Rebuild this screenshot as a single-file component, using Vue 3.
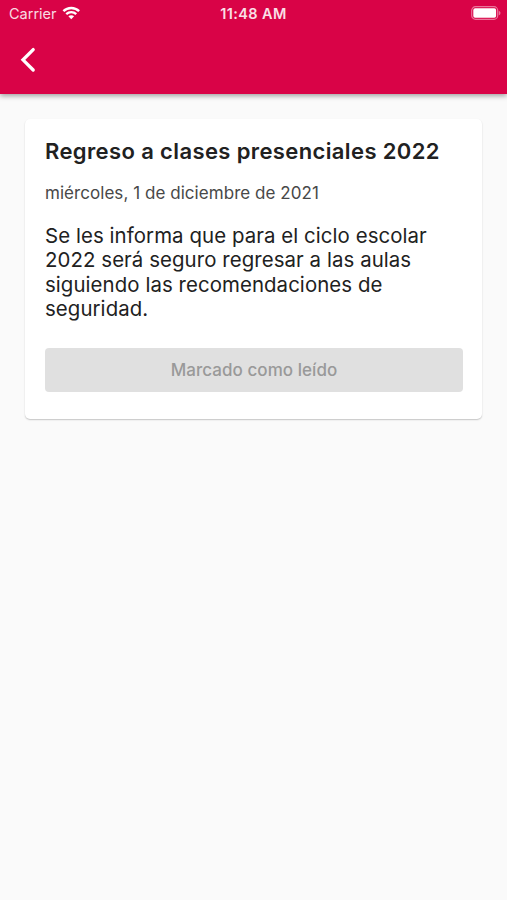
<template>
  <div class="screen">
    <header class="top">
      <div class="status">
        <div class="carrier">
          <span class="carrier-name">Carrier</span>
          <svg class="wifi" width="18.5" height="14" viewBox="0 0 20 15">
            <path d="M1.5 5.5C6.2 .9 13.8 .9 18.5 5.5" />
            <path d="M4.6 8.7C7.7 5.9 12.3 5.9 15.4 8.7" />
            <path class="fill" d="M10 14.2L6.9 11.1C8.6 9.5 11.4 9.5 13.1 11.1Z" />
          </svg>
        </div>
        <span class="clock">11:48 AM</span>
        <svg class="battery" width="30" height="14" viewBox="0 0 30 14">
          <rect class="shell" x=".7" y=".7" width="26" height="12.6" rx="3.8" />
          <rect class="charge" x="2.3" y="2.2" width="22.8" height="9.6" rx="1.8" />
          <path class="tip" d="M27.8 4.7C30 5.6 30 8.4 27.8 9.3Z" />
        </svg>
      </div>
      <nav class="bar">
        <svg class="back" width="16" height="26" viewBox="0 0 16 26"><path d="M13.2 2.6L3 12.8L13.2 23" /></svg>
      </nav>
    </header>
    <main>
      <article class="card">
        <h1>Regreso a clases presenciales 2022</h1>
        <time>miércoles, 1 de diciembre de 2021</time>
        <p>Se les informa que para el ciclo escolar<br />2022 será seguro regresar a las aulas<br />siguiendo las recomendaciones de<br />seguridad.</p>
        <button disabled>Marcado como leído</button>
      </article>
    </main>
  </div>
</template>

<script setup>
</script>

<style>
body { margin: 0; background: #fafafa; }
</style>

<style scoped>
.screen { min-height: 900px; background: #fafafa; font-family: Inter, "Liberation Sans", sans-serif; }
.top { height: 93.5px; background: #d90347; box-shadow: 0 2px 5px rgba(0, 0, 0, .36); color: #fff; }
.status { height: 27px; display: grid; grid-template-columns: 1fr auto 1fr; align-items: center; padding: 0 7px 0 9px; box-sizing: border-box; }
.carrier { display: flex; align-items: center; gap: 5px; font-size: 14.5px; }
.carrier-name { opacity: .85; }
.wifi { margin-top: -1px; fill: none; stroke: #fff; stroke-width: 2.6; }
.wifi .fill { fill: #fff; stroke: none; }
.clock { margin-left: -2px; font-size: 14.5px; font-weight: 600; letter-spacing: .4px; opacity: .87; }
.battery { justify-self: end; margin-right: -1px; margin-top: -1px; }
.shell { fill: none; stroke: #fff; stroke-width: 1.2; opacity: .45; }
.charge { fill: #fff; }
.tip { fill: #fff; opacity: .45; }
.bar { height: 65px; display: flex; align-items: center; padding-left: 20px; }
.back { fill: none; stroke: #fff; stroke-width: 3.3; stroke-linecap: round; }
main { padding: 25px 25px 0; }
.card { height: 300px; box-sizing: border-box; padding: 18px 19px 18px 20px; display: flex; flex-direction: column; background: #fff; border-radius: 5px; box-shadow: 0 1px 1.5px rgba(0, 0, 0, .22); }
h1 { margin: 0; font-size: 22px; line-height: 28px; font-weight: 600; letter-spacing: .38px; color: #212121; white-space: nowrap; }
time { margin-top: 17px; font-size: 17px; line-height: 22px; letter-spacing: .05px; color: #484848; white-space: nowrap; }
p { margin: 20px 0 0; font-size: 20.4px; line-height: 24.5px; letter-spacing: .08px; color: #212121; white-space: nowrap; }
button { margin-top: 26.6px; padding: 0; height: 43.5px; flex: none; border: 0; border-radius: 4px; background: #e0e0e0; color: #999; font: 500 17px Inter, sans-serif; letter-spacing: .05px; }
</style>
